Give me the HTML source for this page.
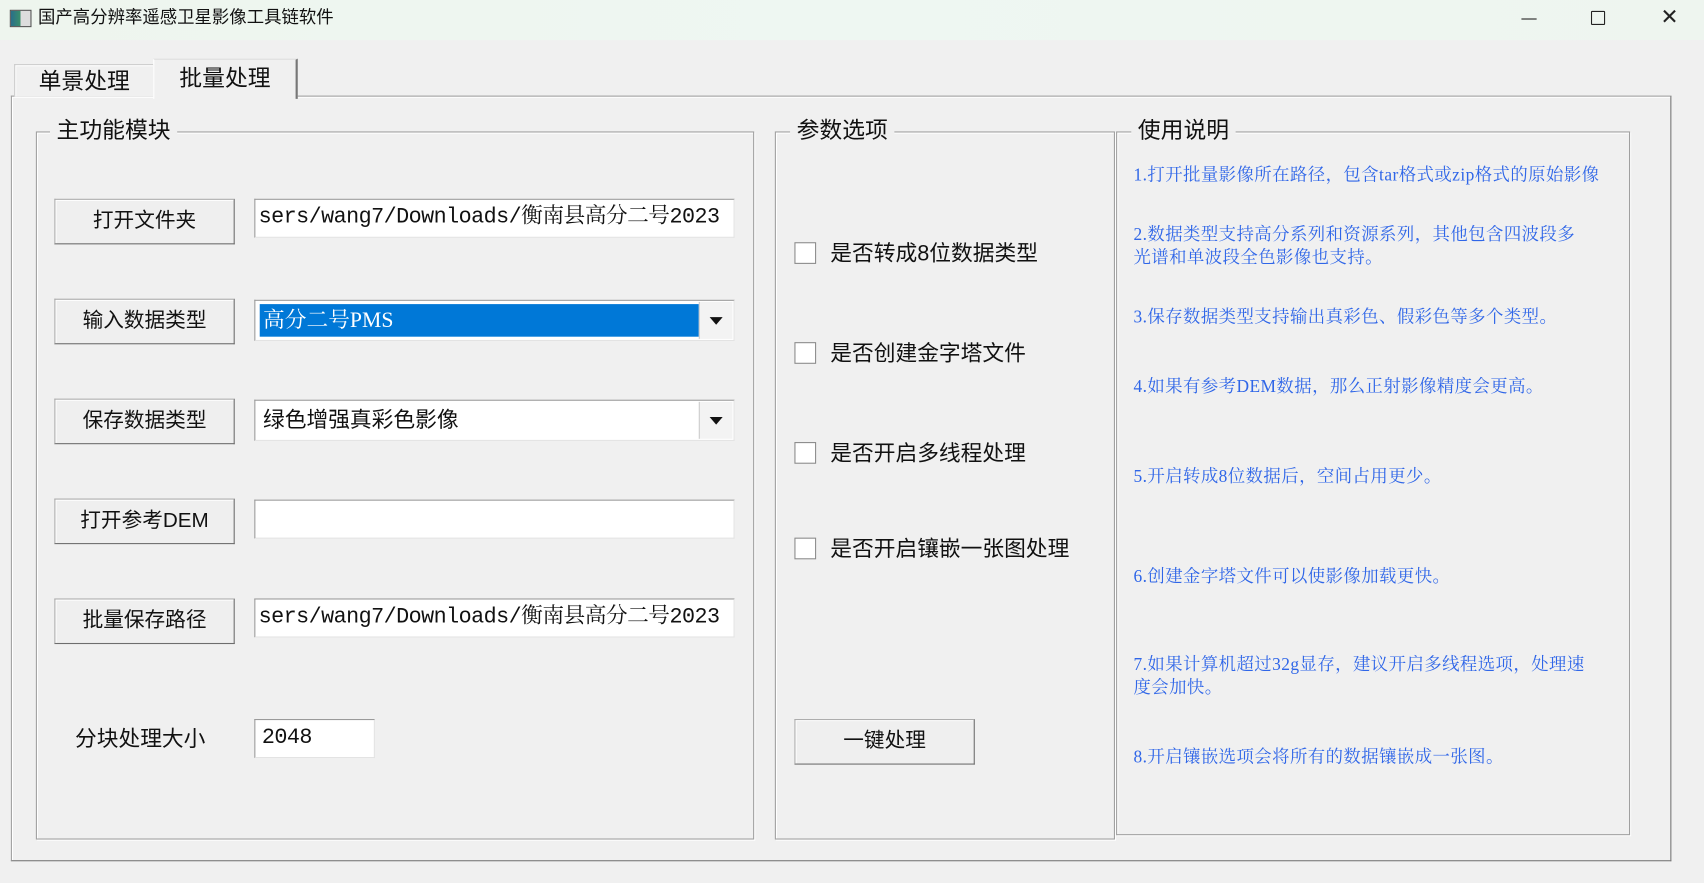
<!DOCTYPE html>
<html><head><meta charset="utf-8"><style>
html,body{margin:0;padding:0;width:1704px;height:883px;overflow:hidden;background:#f0f0f0}
#w{position:absolute;left:0;top:0;width:1568px;height:813px;transform:scale(1.08673,1.0861);transform-origin:0 0;font-family:"Liberation Sans","Noto Sans CJK SC",sans-serif;color:#111}
.a{position:absolute}
.tb{left:0;top:0;width:1568px;height:37px;background:linear-gradient(90deg,#eef5ee,#eef7f2 50%,#eef5ef)}
.btn{position:absolute;width:164px;height:40px;background:#efefef;border:1px solid #adadad;border-right-color:#6d6d6d;border-bottom-color:#6d6d6d;box-shadow:inset 1px 1px 0 #fff;font-size:19px;text-align:center;line-height:40px}
.inp{position:absolute;background:#fff;border:1px solid #9a9a9a;border-right-color:#e3e3e3;border-bottom-color:#e3e3e3;font-family:"Liberation Mono","Noto Serif CJK SC",serif;font-size:20px;letter-spacing:-0.5px;line-height:34px;padding-left:3px;overflow:hidden;white-space:nowrap;box-sizing:border-box}
.grp{position:absolute;border:1px solid #a0a0a0;box-shadow:1px 1px 0 #fff inset,1px 1px 0 #fff}
.lg{position:absolute;top:-14px;background:#f0f0f0;padding:0 6px;font-size:21px;line-height:26px}
.cb{position:absolute;left:731px;width:20px;height:20px;background:#fff;border:1px solid #8a8a8a;box-sizing:border-box}
.ct{position:absolute;left:764px;font-size:20px;line-height:24px}
.n{position:absolute;left:1043px;color:#2f66e8;font-family:"Liberation Serif","Noto Serif CJK SC",serif;font-size:16px;letter-spacing:0.4px;line-height:21px;width:450px}
.dd{position:absolute;width:30px;height:34px;background:#f3f3f3;border-left:1px solid #ccc}
.dd:after{content:"";position:absolute;left:9px;top:14px;border-left:6px solid transparent;border-right:6px solid transparent;border-top:7px solid #111}
</style></head><body><div id="w">
<div class="a tb"></div>
<div class="a" style="left:9px;top:9px;width:18px;height:14px;border:1px solid #555;background:linear-gradient(90deg,#2a6e8a 0,#3a8f6a 50%,#ddd 50%)"></div>
<div class="a" style="left:35px;top:6px;font-size:16px;line-height:22px">国产高分辨率遥感卫星影像工具链软件</div>
<div class="a" style="left:1400px;top:17px;width:14px;height:1px;background:#222"></div>
<div class="a" style="left:1464px;top:10px;width:11px;height:11px;border:1.5px solid #222;border-radius:1px"></div>
<div class="a" style="left:1528px;top:5px;font-size:20px;line-height:22px;color:#222">✕</div>

<div class="a" style="left:10px;top:88px;width:1526px;height:703px;border:1px solid #a0a0a0;border-right-color:#777;border-bottom-color:#777;box-shadow:inset 1px 1px 0 #fff"></div>
<div class="a" style="left:13px;top:59px;width:127px;height:29px;border:1px solid #ccc;border-bottom:none;background:#f0f0f0;box-shadow:inset 1px 1px 0 #fff;font-size:21px;text-align:center;line-height:32px">单景处理</div>
<div class="a" style="left:141px;top:54px;width:130px;height:36px;border-top:1px solid #ddd;border-left:1px solid #fff;border-right:2px solid #777;background:#f0f0f0;font-size:21px;text-align:center;line-height:36px">批量处理</div>

<div class="grp" style="left:33px;top:121px;width:659px;height:650px"><div class="lg" style="left:12px">主功能模块</div></div>
<div class="grp" style="left:713px;top:121px;width:311px;height:650px"><div class="lg" style="left:13px">参数选项</div></div>
<div class="grp" style="left:1027px;top:121px;width:471px;height:646px"><div class="lg" style="left:13px">使用说明</div></div>

<div class="btn" style="left:50px;top:183px">打开文件夹</div>
<div class="btn" style="left:50px;top:275px">输入数据类型</div>
<div class="btn" style="left:50px;top:367px">保存数据类型</div>
<div class="btn" style="left:50px;top:459px">打开参考DEM</div>
<div class="btn" style="left:50px;top:551px">批量保存路径</div>

<div class="inp" style="left:234px;top:183px;width:442px;height:36px">sers/wang7/Downloads/衡南县高分二号2023</div>
<div class="inp" style="left:234px;top:276px;width:442px;height:38px;padding:2px"><div style="position:absolute;left:4px;top:3px;width:403px;height:30px;background:#0078d7;color:#fff;line-height:30px;padding-left:3px;font-size:20px;font-family:'Liberation Serif','Noto Serif CJK SC',serif;letter-spacing:0">高分二号PMS</div><div class="dd" style="left:408px;top:1px"></div></div>
<div class="inp" style="left:234px;top:368px;width:442px;height:38px;padding:0"><div style="position:absolute;left:7px;top:1px;font-size:20px;letter-spacing:0;font-family:'Liberation Sans','Noto Sans CJK SC',sans-serif">绿色增强真彩色影像</div><div class="dd" style="left:408px;top:1px"></div></div>
<div class="inp" style="left:234px;top:460px;width:442px;height:36px"></div>
<div class="inp" style="left:234px;top:551px;width:442px;height:36px">sers/wang7/Downloads/衡南县高分二号2023</div>
<div class="a" style="left:69px;top:669px;font-size:20px;line-height:24px">分块处理大小</div>
<div class="inp" style="left:234px;top:662px;width:111px;height:36px;padding-left:6px;font-size:20px">2048</div>

<div class="cb" style="top:223px"></div><div class="ct" style="top:222px">是否转成8位数据类型</div>
<div class="cb" style="top:315px"></div><div class="ct" style="top:314px">是否创建金字塔文件</div>
<div class="cb" style="top:407px"></div><div class="ct" style="top:406px">是否开启多线程处理</div>
<div class="cb" style="top:495px"></div><div class="ct" style="top:494px">是否开启镶嵌一张图处理</div>
<div class="btn" style="left:731px;top:662px">一键处理</div>

<div class="n" style="top:151px;white-space:nowrap">1.打开批量影像所在路径，包含tar格式或zip格式的原始影像</div>
<div class="n" style="top:206px">2.数据类型支持高分系列和资源系列，其他包含四波段多<br>光谱和单波段全色影像也支持。</div>
<div class="n" style="top:282px">3.保存数据类型支持输出真彩色、假彩色等多个类型。</div>
<div class="n" style="top:346px">4.如果有参考DEM数据，那么正射影像精度会更高。</div>
<div class="n" style="top:429px">5.开启转成8位数据后，空间占用更少。</div>
<div class="n" style="top:521px">6.创建金字塔文件可以使影像加载更快。</div>
<div class="n" style="top:602px">7.如果计算机超过32g显存，建议开启多线程选项，处理速<br>度会加快。</div>
<div class="n" style="top:687px">8.开启镶嵌选项会将所有的数据镶嵌成一张图。</div>
</div></body></html>
